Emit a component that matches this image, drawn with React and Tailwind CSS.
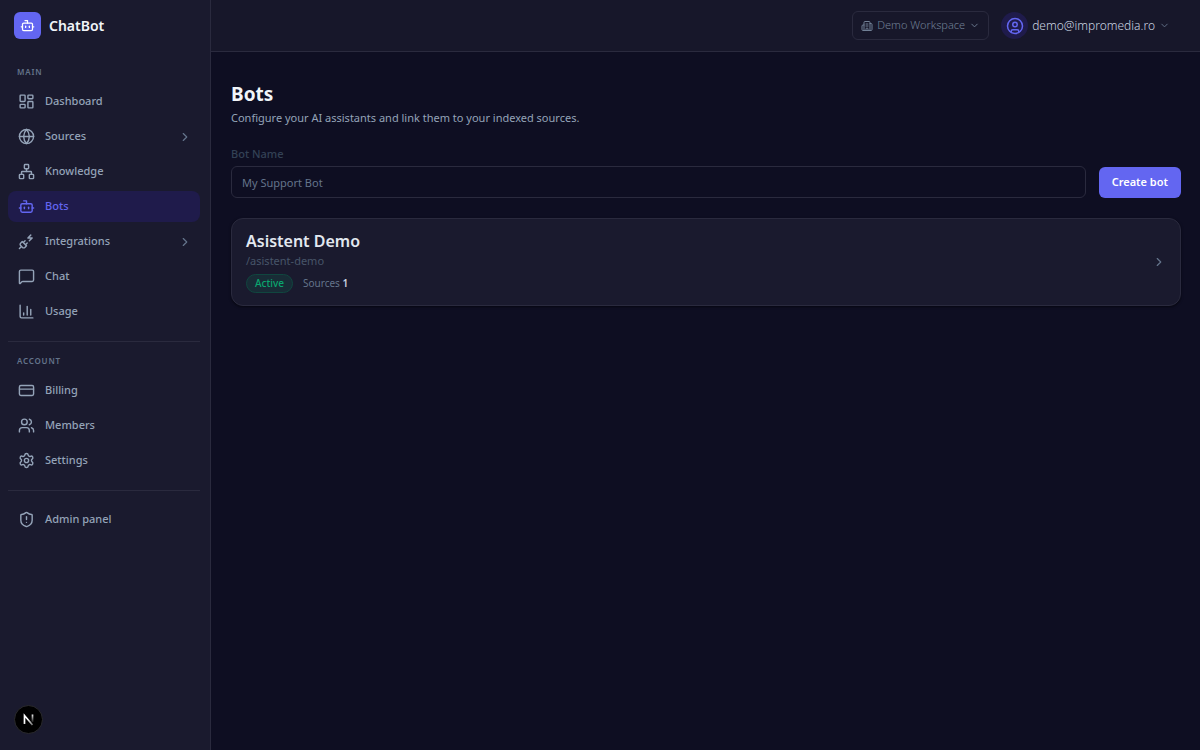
import {
    Bot, Building2, ChartColumn, ChevronDown, ChevronRight, CircleUser, CreditCard, Globe,
    LayoutDashboard, MessageSquare, Network, PlugZap, Settings, ShieldAlert, Users
} from 'lucide-react';

const mainItems = [
    { id: 'dashboard', icon: LayoutDashboard, label: 'Dashboard' },
    { id: 'sources', icon: Globe, label: 'Sources', expandable: true },
    { id: 'knowledge', icon: Network, label: 'Knowledge' },
    { id: 'bots', icon: Bot, label: 'Bots' },
    { id: 'integrations', icon: PlugZap, label: 'Integrations', expandable: true },
    { id: 'chat', icon: MessageSquare, label: 'Chat' },
    { id: 'usage', icon: ChartColumn, label: 'Usage' }
];

const accountItems = [
    { id: 'billing', icon: CreditCard, label: 'Billing' },
    { id: 'members', icon: Users, label: 'Members' },
    { id: 'settings', icon: Settings, label: 'Settings' }
];

const adminItems = [{ id: 'admin', icon: ShieldAlert, label: 'Admin panel' }];

const bots = [{ slug: 'asistent-demo', name: 'Asistent Demo', status: 'Active', sources: 1 }];

function NavList({ items, active }) {
    return (
        <ul className="flex flex-col gap-1">
            {items.map(({ id, icon: Icon, label, expandable }) => (
                <li key={id}>
                    <a href={`#${id}`}
                        className={`flex h-[31px] items-center gap-[10px] rounded-lg pr-2 pl-[10px] text-[11px] font-medium ${active === id ? 'bg-[#1f1b4b] text-[#6366f1]' : 'text-[#94a3b8] hover:bg-white/5'}`}>
                        <Icon size={17} />
                        <span className="flex-1">{label}</span>
                        {expandable && <ChevronRight size={14} className="text-[#64748b]" />}
                    </a>
                </li>
            ))}
        </ul>
    );
}

function SectionLabel({ children }) {
    return <h2 className="mb-2 pl-[9px] text-[8px] leading-[12px] font-semibold tracking-widest text-[#64748b] uppercase">{children}</h2>;
}

function Sidebar() {
    return (
        <aside className="flex w-[211px] shrink-0 flex-col border-r border-[#2a2a3e] bg-[#1a1a2e]">
            <div className="flex h-[51px] items-center gap-2 px-3.5">
                <div className="flex size-[27px] items-center justify-center rounded-md bg-[#6366f1] text-white">
                    <Bot size={15} />
                </div>
                <span className="text-[14px] font-semibold text-[#f1f5f9]">ChatBot</span>
            </div>
            <nav className="flex-1 pt-[15px] pr-[10px] pl-2">
                <SectionLabel>Main</SectionLabel>
                <NavList items={mainItems} active="bots" />
                <hr className="mt-[14px] mb-[13px] border-[#2a2a3e]" />
                <SectionLabel>Account</SectionLabel>
                <NavList items={accountItems} />
                <hr className="mt-[14px] mb-[13px] border-[#2a2a3e]" />
                <NavList items={adminItems} />
            </nav>
            <div className="px-3.5 pb-4">
                <button aria-label="Open dev tools" className="flex size-[29px] items-center justify-center rounded-full border border-[#2b2b2f] bg-black">
                    <svg width="13" height="13" viewBox="0 0 13 13" fill="none" strokeWidth="1.7">
                        <defs>
                            <linearGradient id="fadeDiagonal" x1="6" y1="6" x2="11" y2="12" gradientUnits="userSpaceOnUse">
                                <stop stopColor="#fff" />
                                <stop offset="1" stopColor="#fff" stopOpacity="0.4" />
                            </linearGradient>
                            <linearGradient id="fadeStem" x1="10" y1="1" x2="10" y2="10" gradientUnits="userSpaceOnUse">
                                <stop stopColor="#fff" />
                                <stop offset="1" stopColor="#fff" stopOpacity="0" />
                            </linearGradient>
                        </defs>
                        <path d="M2.5 11V2.5L10.5 12" stroke="url(#fadeDiagonal)" />
                        <path d="M10.5 1.5V9" stroke="url(#fadeStem)" />
                    </svg>
                </button>
            </div>
        </aside>
    );
}

function TopBar() {
    return (
        <header className="flex h-[52px] items-center justify-end gap-3 border-b border-[#2a2a3e] bg-[#17172a] pr-[30px]">
            <button className="flex h-[29px] items-center rounded-md border border-[#2a2a3e] px-2 text-[11px] font-light text-[#718096]">
                <Building2 size={12} className="mr-1" />
                Demo Workspace
                <ChevronDown size={11} className="ml-1" />
            </button>
            <button className="flex items-center text-[12px] font-light text-[#cbd5e1]">
                <span className="mr-1 flex size-[27px] items-center justify-center rounded-full bg-[#1f1b4b] text-[#6366f1]">
                    <CircleUser size={18} />
                </span>
                demo@impromedia.ro
                <ChevronDown size={11} className="ml-1 text-[#64748b]" />
            </button>
        </header>
    );
}

function BotCard({ bot }) {
    return (
        <a href={`#bots/${bot.slug}`} className="flex items-center justify-between rounded-xl border border-[#2a2a3e] bg-[#1a1a2e] px-[14px] py-3 shadow-sm shadow-black/40">
            <div>
                <h2 className="text-[16px] leading-[20px] font-semibold text-[#e2e8f0]">{bot.name}</h2>
                <p className="text-[11px] leading-[20px] text-[#475569]">/{bot.slug}</p>
                <div className="mt-[3px] flex items-center gap-[10px] text-[10px]">
                    <span className="rounded-full border border-[#10463f] bg-[#182c36] px-2 leading-[17px] font-medium text-[#0aa56f]">{bot.status}</span>
                    <span className="text-[#64748b]">Sources <b className="font-semibold text-[#cbd5e1]">{bot.sources}</b></span>
                </div>
            </div>
            <ChevronRight size={14} className="text-[#64748b]" />
        </a>
    );
}

export default function App() {
    return (
        <div className="flex min-h-screen bg-[#0e0e22] font-['Noto_Sans','Open_Sans',sans-serif]">
            <Sidebar />
            <div className="min-w-0 flex-1">
                <TopBar />
                <main className="pt-[30px] pr-[19px] pl-5">
                    <h1 className="text-[19px] leading-[24px] font-bold text-[#f1f5f9]">Bots</h1>
                    <p className="text-[11px] leading-[24px] text-[#94a3b8]">Configure your AI assistants and link them to your indexed sources.</p>
                    <form className="mt-3.5 flex items-end gap-[13px]" onSubmit={e => e.preventDefault()}>
                        <div className="flex-1">
                            <label htmlFor="bot-name" className="mb-0.5 block text-[11px] leading-[20px] font-medium text-[#334155]">Bot Name</label>
                            <input id="bot-name" type="text" placeholder="My Support Bot"
                                className="block h-8 w-full rounded-md border border-[#2a2a3e] bg-transparent px-[10px] text-[11px] text-[#e2e8f0] placeholder-[#64748b] outline-none focus:border-[#6366f1]" />
                        </div>
                        <button type="submit" className="h-[31px] rounded-md bg-[#6366f1] px-[13px] text-[11px] font-semibold text-white">Create bot</button>
                    </form>
                    <section className="mt-5">
                        {bots.map(bot => <BotCard key={bot.slug} bot={bot} />)}
                    </section>
                </main>
            </div>
        </div>
    );
}
